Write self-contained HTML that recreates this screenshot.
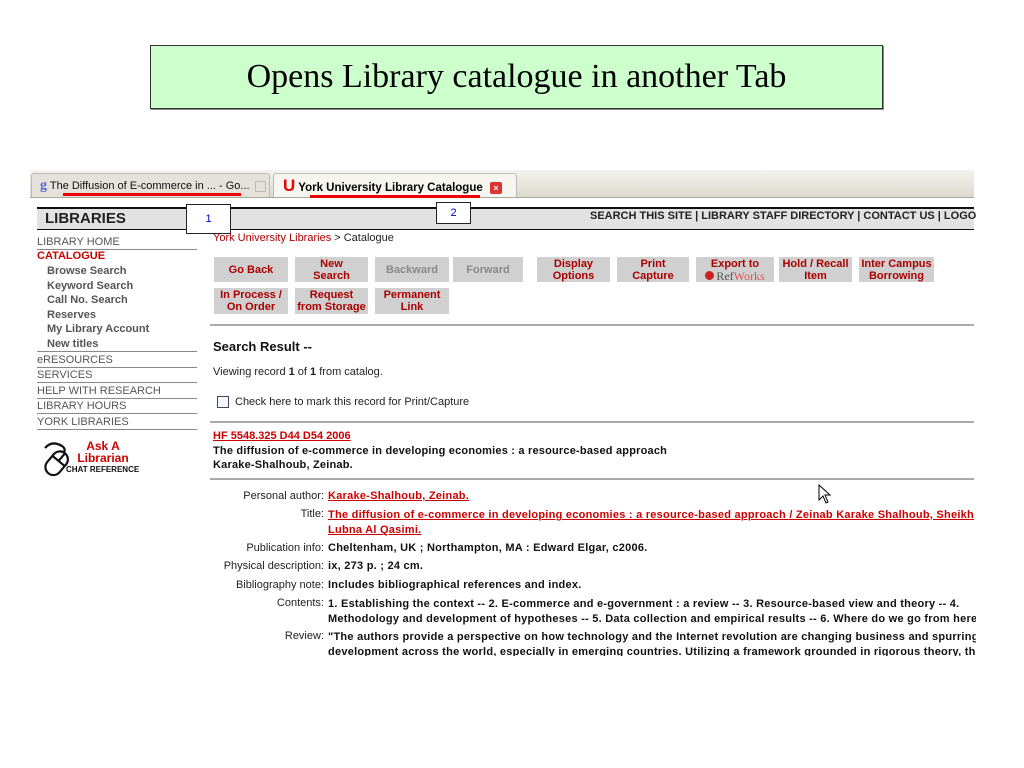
<!DOCTYPE html>
<html><head><meta charset="utf-8"><style>
*{margin:0;padding:0;box-sizing:border-box}
body{width:1024px;height:768px;background:#fff;position:relative;overflow:hidden;font-family:"Liberation Sans",sans-serif}
.a{position:absolute;white-space:nowrap}
.title{left:150px;top:45px;width:733px;height:64px;background:#ccffcc;border:1px solid #333;box-shadow:1px 1px 0 #888;font-family:"Liberation Serif",serif;font-size:34px;text-align:center;line-height:62px;color:#000}
.tabbar{left:30px;top:170px;width:944px;height:28px;background:linear-gradient(#f4f3ee,#dcd9ce);border-bottom:1px solid #a9a79c}
.tab{top:173px;height:24px;font-size:11.5px;line-height:24px;border:1px solid #bbb;border-bottom:none;border-radius:3px 3px 0 0;overflow:hidden}
.hdr{left:37px;top:207px;width:937px;height:23px;background:#e2e2e2;border-top:2px solid #111;border-bottom:1px solid #111}
.nav{left:37px;font-size:11px;color:#555;width:160px;border-bottom:1px solid #888;height:15px;line-height:14px}
.sub{left:47px;font-size:11px;color:#555;font-weight:bold;line-height:14px}
.btn{background:#d0d0d0;color:#a00;font-weight:bold;font-size:11px;text-align:center;line-height:12px;display:flex;align-items:center;justify-content:center}
.g{color:#888}
.lab{right:700px;font-size:11px;color:#222;text-align:right}
.val{left:328px;font-size:11px;font-weight:bold;color:#111;letter-spacing:0.25px}
.lnk{color:#c00;text-decoration:underline}
.hr{height:2px;background:#aaa;left:210px;width:764px}
.box{background:#fff;border:1px solid #222;color:#00c;font-size:11px;text-align:center}
</style></head><body>
<div class="a title">Opens Library catalogue in another Tab</div>

<div class="a tabbar"></div>
<div class="a tab" style="left:31px;width:239px;background:#e4e2da;color:#111;padding-left:8px;font-size:11px"><span style="color:#5566cc;font-weight:bold;font-family:'Liberation Serif',serif;font-size:14px">g</span> The Diffusion of E-commerce in ... - Go... <span style="display:inline-block;width:11px;height:11px;border:1px solid #bbb;vertical-align:middle;margin-left:2px"></span></div>
<div class="a tab" style="left:273px;width:244px;background:#f6f5f0;color:#000;font-weight:bold;padding-left:9px"><span style="color:#e00;font-size:17px;font-weight:900">U</span> York University Library Catalogue <span style="display:inline-block;width:12px;height:12px;background:#d33;border-radius:2px;vertical-align:middle;margin-left:4px;color:#fff;font-size:9px;line-height:12px;text-align:center">×</span></div>
<div class="a" style="left:63px;top:193px;width:178px;height:3px;background:#e00"></div>
<div class="a" style="left:310px;top:195px;width:170px;height:3px;background:#e00"></div>

<div class="a hdr"></div>
<div class="a" style="left:45px;top:210px;font-size:15px;font-weight:bold;color:#222">LIBRARIES</div>
<div class="a" style="left:590px;top:210px;font-size:11px;font-weight:bold;color:#222">SEARCH THIS SITE | LIBRARY STAFF DIRECTORY | CONTACT US | LOGOU</div>
<div class="a box" style="left:186px;top:204px;width:45px;height:30px;line-height:28px">1</div>
<div class="a box" style="left:436px;top:202px;width:35px;height:22px;line-height:20px">2</div>

<div class="a" style="left:213px;top:232px;font-size:11px;color:#222"><span style="color:#a00">York University Libraries</span> &gt; Catalogue</div>

<div class="a nav" style="top:235px">LIBRARY HOME</div>
<div class="a" style="left:37px;top:250px;font-size:11px;color:#c00;font-weight:bold">CATALOGUE</div>
<div class="a sub" style="top:264px">Browse Search</div>
<div class="a sub" style="top:279px">Keyword Search</div>
<div class="a sub" style="top:293px">Call No. Search</div>
<div class="a sub" style="top:308px">Reserves</div>
<div class="a sub" style="top:322px">My Library Account</div>
<div class="a nav" style="top:337px;padding-left:10px;font-weight:bold">New titles</div>
<div class="a nav" style="top:353px">eRESOURCES</div>
<div class="a nav" style="top:368px">SERVICES</div>
<div class="a nav" style="top:384px">HELP WITH RESEARCH</div>
<div class="a nav" style="top:399px">LIBRARY HOURS</div>
<div class="a nav" style="top:415px">YORK LIBRARIES</div>
<svg class="a" style="left:42px;top:440px" width="34" height="38" viewBox="0 0 34 38"><g fill="none" stroke="#111" stroke-width="2.2"><path d="M3 8 Q10 0 20 6 Q24 9 22 12"/><g transform="rotate(40 14 24)"><rect x="6" y="10" width="16" height="26" rx="8"/><path d="M14 10 L14 20 M6 20 L22 20"/></g></g></svg>
<div class="a" style="left:68px;top:440px;font-size:12px;font-weight:bold;color:#c00;text-align:center;line-height:12px;width:70px">Ask A<br>Librarian</div>
<div class="a" style="left:66px;top:465px;font-size:8px;font-weight:bold;color:#111">CHAT REFERENCE</div>

<div class="a btn" style="left:214px;top:257px;width:74px;height:25px">Go Back</div>
<div class="a btn" style="left:295px;top:257px;width:73px;height:25px">New<br>Search</div>
<div class="a btn g" style="left:375px;top:257px;width:74px;height:25px">Backward</div>
<div class="a btn g" style="left:453px;top:257px;width:70px;height:25px">Forward</div>
<div class="a btn" style="left:537px;top:257px;width:73px;height:25px">Display<br>Options</div>
<div class="a btn" style="left:617px;top:257px;width:72px;height:25px">Print<br>Capture</div>
<div class="a btn" style="left:696px;top:257px;width:78px;height:25px;flex-direction:column">Export to<span style="color:#555;font-family:'Liberation Serif',serif;font-weight:normal;font-size:12px"><span style="display:inline-block;width:9px;height:9px;border-radius:50%;background:#c22;margin-right:2px"></span>Ref<span style="color:#d55">Works</span></span></div>
<div class="a btn" style="left:779px;top:257px;width:73px;height:25px;align-items:flex-start;padding-top:1px">Hold / Recall<br>Item</div>
<div class="a btn" style="left:859px;top:257px;width:75px;height:25px;align-items:flex-start;padding-top:1px">Inter Campus<br>Borrowing</div>
<div class="a btn" style="left:214px;top:288px;width:74px;height:26px">In Process /<br>On Order</div>
<div class="a btn" style="left:295px;top:288px;width:73px;height:26px">Request<br>from Storage</div>
<div class="a btn" style="left:375px;top:288px;width:74px;height:26px">Permanent<br>Link</div>

<div class="a hr" style="top:324px"></div>
<div class="a" style="left:213px;top:339px;font-size:13px;font-weight:bold;color:#111">Search Result --</div>
<div class="a" style="left:213px;top:366px;font-size:11px;color:#222">Viewing record <b>1</b> of <b>1</b> from catalog.</div>
<div class="a" style="left:217px;top:396px;width:12px;height:12px;border:1px solid #446;background:#f4f6fa"></div>
<div class="a" style="left:235px;top:396px;font-size:11px;color:#222">Check here to mark this record for Print/Capture</div>
<div class="a hr" style="top:421px"></div>
<div class="a lnk" style="left:213px;top:430px;font-size:11px;font-weight:bold">HF 5548.325 D44 D54 2006</div>
<div class="a" style="left:213px;top:444px;font-size:11px;font-weight:bold;color:#111;line-height:14px;letter-spacing:0.2px">The diffusion of e-commerce in developing economies : a resource-based approach<br>Karake-Shalhoub, Zeinab.</div>
<div class="a hr" style="top:478px"></div>

<div class="a lab" style="top:490px">Personal author:</div>
<div class="a val lnk" style="top:490px">Karake-Shalhoub, Zeinab.</div>
<div class="a lab" style="top:508px">Title:</div>
<div class="a val lnk" style="top:508px;line-height:15px">The diffusion of e-commerce in developing economies : a resource-based approach / Zeinab Karake Shalhoub, Sheikh<br>Lubna Al Qasimi.</div>
<div class="a lab" style="top:542px">Publication info:</div>
<div class="a val" style="top:542px">Cheltenham, UK ; Northampton, MA : Edward Elgar, c2006.</div>
<div class="a lab" style="top:560px">Physical description:</div>
<div class="a val" style="top:560px">ix, 273 p. ; 24 cm.</div>
<div class="a lab" style="top:579px">Bibliography note:</div>
<div class="a val" style="top:579px">Includes bibliographical references and index.</div>
<div class="a lab" style="top:597px">Contents:</div>
<div class="a val" style="top:597px;line-height:15px">1. Establishing the context -- 2. E-commerce and e-government : a review -- 3. Resource-based view and theory -- 4.<br>Methodology and development of hypotheses -- 5. Data collection and empirical results -- 6. Where do we go from here</div>
<div class="a lab" style="top:630px">Review:</div>
<div class="a val" style="top:630px;line-height:15px">"The authors provide a perspective on how technology and the Internet revolution are changing business and spurring<br>development across the world, especially in emerging countries. Utilizing a framework grounded in rigorous theory, th</div>
<div class="a" style="left:976px;top:165px;width:48px;height:500px;background:#fff"></div>
<div class="a" style="left:0;top:656px;width:1024px;height:112px;background:#fff"></div>
<svg class="a" style="left:818px;top:484px" width="14" height="20"><path d="M1 1 L1 16 L5 12 L8 19 L10 18 L7 11 L12 11 Z" fill="#fff" stroke="#000"/></svg>
</body></html>
